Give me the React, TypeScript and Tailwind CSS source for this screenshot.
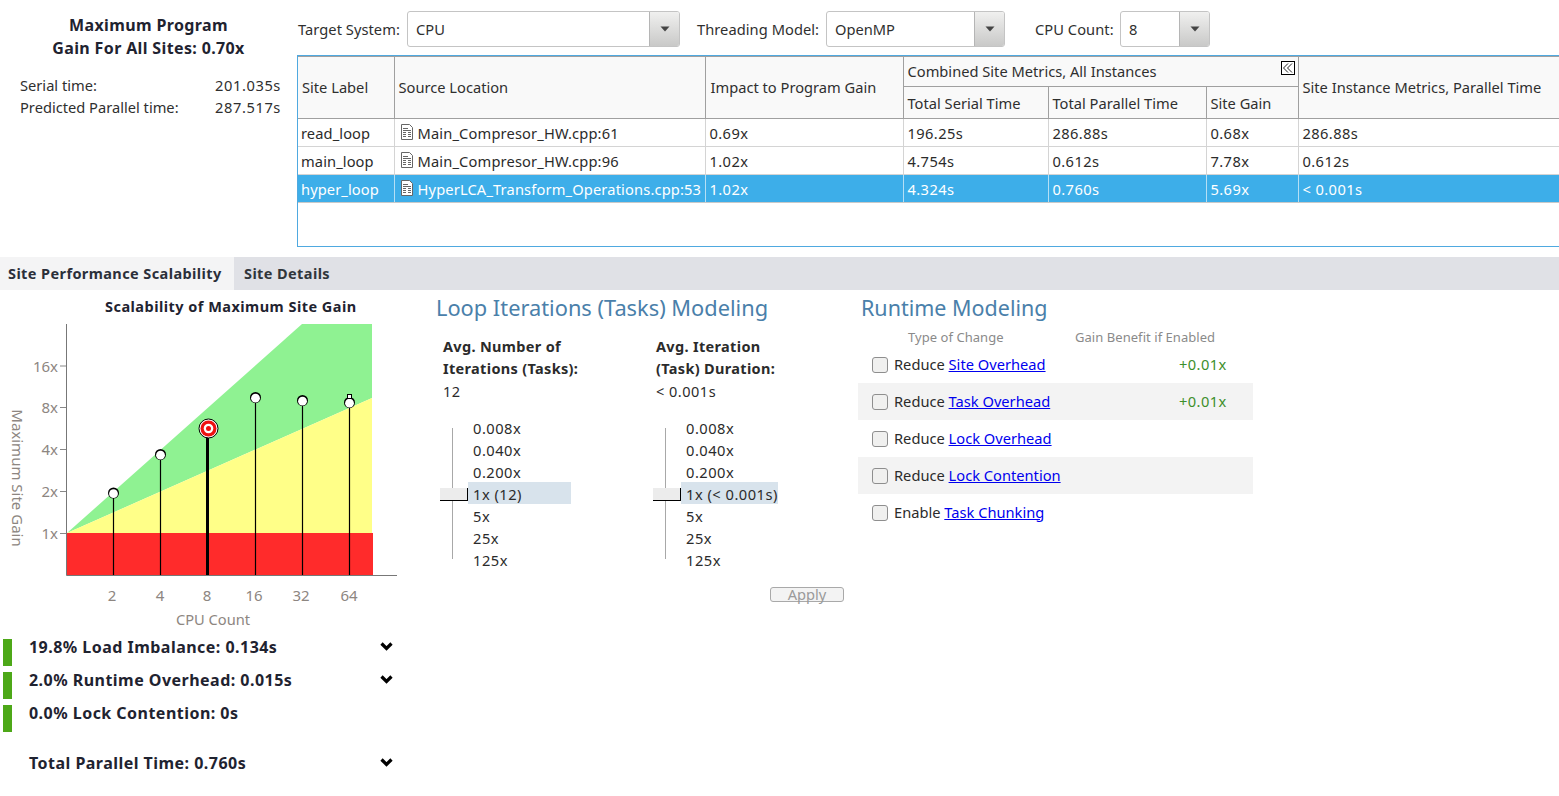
import React from "react";

function DocIcon() {
  const c = "#666666";
  return (
    <svg width="12" height="16" viewBox="0 0 12 16" className="shrink-0 mb-[1px]">
      <path d="M0.5 0.5H8.5L11.5 3.5V15.5H0.5Z" fill="#fff" stroke={c} />
      <path d="M2 4.5H7M2 6.5H10M2 8.5H5M7 8.5H10M2 10.5H5M7 10.5H10M2 12.5H5M7 12.5H10" stroke={c} />
    </svg>
  );
}

function Combo({ label, value, width, labelW }: { label: string; value: string; width: string; labelW: string }) {
  return (
    <div className="flex items-center gap-[7px]">
      <span className={`${labelW} shrink-0 pb-[1px] text-[14.67px] tracking-[0.05px] text-[#2f2f2f] whitespace-nowrap`}>{label}</span>
      <div className={`flex h-[36px] ${width} rounded-[3px] border border-[#c4c4c4] bg-white overflow-hidden`}>
        <span className="flex-1 min-w-0 pl-[8px] pb-[1px] flex items-center text-[14.67px] text-[#2f2f2f]">{value}</span>
        <span className="w-[30px] flex items-center justify-center border-l border-[#b5b5b5] bg-gradient-to-b from-[#f0f0ef] to-[#c9c9c8]">
          <svg width="10" height="6" viewBox="0 0 10 6"><path d="M0.5 0.5H9.5L5 5.5Z" fill="#444" /></svg>
        </span>
      </div>
    </div>
  );
}

const rows = [
  { label: "read_loop", src: "Main_Compresor_HW.cpp:61", impact: "0.69x", serial: "196.25s", par: "286.88s", gain: "0.68x", inst: "286.88s" },
  { label: "main_loop", src: "Main_Compresor_HW.cpp:96", impact: "1.02x", serial: "4.754s", par: "0.612s", gain: "7.78x", inst: "0.612s" },
  { label: "hyper_loop", src: "HyperLCA_Transform_Operations.cpp:53", impact: "1.02x", serial: "4.324s", par: "0.760s", gain: "5.69x", inst: "< 0.001s", sel: true },
];

function SiteTable() {
  const th = "border border-[#a0a0a0] bg-[#f9f9f9] font-normal text-left pr-[4px] text-[14.67px] text-[#2f2f2f] whitespace-nowrap";
  return (
    <div className="h-[192px] border-l border-t border-b border-[#4fa9e0] overflow-hidden">
      <table className="table-fixed border-collapse w-[1261px]">
        <colgroup>
          <col className="w-[96px]" />
          <col className="w-[311px]" />
          <col className="w-[198px]" />
          <col className="w-[145px]" />
          <col className="w-[158px]" />
          <col className="w-[92px]" />
          <col className="w-[261px]" />
        </colgroup>
        <thead>
          <tr className="h-[30px]">
            <th rowSpan={2} className={`${th} border-l-0 pl-[4px] pb-[2px]`}>Site Label</th>
            <th rowSpan={2} className={`${th} pl-[4px] pb-[2px]`}>Source Location</th>
            <th rowSpan={2} className={`${th} pl-[5px] pb-[2px]`}>Impact to Program Gain</th>
            <th colSpan={3} className={`${th} pl-[4px] relative pb-[2px]`}>
              Combined Site Metrics, All Instances
              <span className="absolute right-[3px] top-[4px] w-[14px] h-[14px] bg-white border border-black flex items-center justify-center">
                <svg width="12" height="12" viewBox="0 0 12 12" fill="none" stroke="#222"><path d="M6 1.5L1.5 6L6 10.5M10 1.5L5.5 6L10 10.5" /></svg>
              </span>
            </th>
            <th rowSpan={2} className={`${th} pl-[4px] pb-[2px]`}>Site Instance Metrics, Parallel Time</th>
          </tr>
          <tr className="h-[32px]">
            <th className={`${th} pl-[4px]`}>Total Serial Time</th>
            <th className={`${th} pl-[4px]`}>Total Parallel Time</th>
            <th className={`${th} pl-[4px]`}>Site Gain</th>
          </tr>
        </thead>
        <tbody>
          {rows.map((r) => {
            const td = `border border-[#d4d4d4] pr-[3px] text-[14.67px] whitespace-nowrap ${r.sel ? "border-y-[#c9c9c9] border-x-[#b5dff5]" : ""}`;
            const num = `${td} pl-[4px] tracking-[0.4px]`;
            return (
              <tr key={r.label} className={`h-[28px] ${r.sel ? "bg-[#3daee9] text-white" : "text-[#2b2b2b]"}`}>
                <td className={`${td} border-l-0 pl-[3px] tracking-[0.1px]`}>{r.label}</td>
                <td className={`${td} pl-[6px] tracking-[0.15px]`}>
                  <span className="flex items-center gap-[5px]">
                    <DocIcon />
                    {r.src}
                  </span>
                </td>
                <td className={num}>{r.impact}</td>
                <td className={num}>{r.serial}</td>
                <td className={num}>{r.par}</td>
                <td className={num}>{r.gain}</td>
                <td className={num}>{r.inst}</td>
              </tr>
            );
          })}
        </tbody>
      </table>
    </div>
  );
}

function Chart() {
  const yTicks = [
    ["16x", 366],
    ["8x", 407.5],
    ["4x", 449.5],
    ["2x", 491.5],
    ["1x", 533.5],
  ] as const;
  const xs = [
    ["2", 113.5, 493.5, 112],
    ["4", 160.5, 455, 160],
    ["16", 255.5, 398, 254],
    ["32", 302.5, 401, 301],
    ["64", 349.5, 403, 349],
  ] as const;
  return (
    <svg width="410" height="340" viewBox="0 290 410 340" className="block" style={{ fontFamily: "'Noto Sans', sans-serif" }}>
      <polygon points="67,533 302,324 372,324 372,398" fill="#8ff292" />
      <polygon points="67,533 372,398 372,533" fill="#ffff88" />
      <rect x="67" y="533" width="306" height="42" fill="#ff2b2b" />
      <path d="M66.5 324V575.5H397" fill="none" stroke="#777" />
      {yTicks.map(([t, y]) => (
        <g key={t}>
          <path d={`M60 ${y}H66`} stroke="#888" />
          <text x="58" y={y + 5.5} textAnchor="end" fontSize="15" fill="#8d8681">{t}</text>
        </g>
      ))}
      <text transform="translate(16 478) rotate(90)" textAnchor="middle" fontSize="15" fill="#8d8681" dominantBaseline="middle">Maximum Site Gain</text>
      {xs.map(([t, x, cy, lx]) => (
        <g key={t}>
          <path d={`M${x} ${cy}V575`} stroke="#000" strokeWidth="1.2" />
          <circle cx={x} cy={cy - 0.5} r="5.5" fill="#000" />
          <circle cx={x} cy={cy + 0.2} r="4.4" fill="#fff" />
          <text x={lx} y="601" textAnchor="middle" fontSize="15" fill="#8d8681">{t}</text>
        </g>
      ))}
      <rect x="347.5" y="394.5" width="4" height="4" fill="#fff" stroke="#000" />
      <path d="M207.5 430V575" stroke="#000" strokeWidth="3" />
      <circle cx="208.5" cy="428.5" r="9.5" fill="#fff" stroke="#000" strokeWidth="1" />
      <circle cx="208.5" cy="428.5" r="8" fill="#ee1111" />
      <circle cx="208.5" cy="428.5" r="4.8" fill="#fff" />
      <circle cx="208.5" cy="428.5" r="2.5" fill="#ee1111" />
      <text x="207" y="601" textAnchor="middle" fontSize="15" fill="#8d8681">8</text>
      <text x="213" y="624.5" textAnchor="middle" fontSize="14.67" fill="#8d8681">CPU Count</text>
    </svg>
  );
}

function Chevron() {
  return (
    <svg width="13" height="9" viewBox="0 0 13 9" className="shrink-0">
      <path d="M1.5 1.5L6.5 6.5L11.5 1.5" fill="none" stroke="#000" strokeWidth="3.2" />
    </svg>
  );
}

function Metric({ text, bar, chevron, className }: { text: string; bar?: boolean; chevron?: boolean; className?: string }) {
  return (
    <div className={`h-[27px] flex items-start ${className ?? ""}`}>
      <div className={`w-[9px] h-[27px] ml-[3px] ${bar ? "bg-[#4da818]" : ""}`} />
      <span className="ml-[17px] w-[351px] text-[16px] leading-[17px] font-bold tracking-[0.47px] text-[#1f2330] whitespace-nowrap">{text}</span>
      {chevron && <span className="mt-[3px]"><Chevron /></span>}
    </div>
  );
}

function SliderCol({ title, value, current, hlW }: { title: string[]; value: string; current: string; hlW: string }) {
  const items = ["0.008x", "0.040x", "0.200x", current, "5x", "25x", "125x"];
  return (
    <div className="w-[213px] shrink-0">
      <div className="pl-[7px] h-[81px] text-[14.5px] leading-[22px] text-[#2b2b2b]">
        <div className="-mt-[1px] font-bold tracking-[0.33px]">{title[0]}</div>
        <div className="font-bold tracking-[0.33px]">{title[1]}</div>
        <div className="mt-[1px] tracking-[0.5px]">{value}</div>
      </div>
      <div className="flex items-stretch">
        <div className="relative w-[28px] pt-[12px] ml-[4px] shrink-0">
          <div className="w-px h-[131px] bg-[#a8a8a8] ml-[12px]" />
          <div className="absolute left-0 top-[72px] w-[28px] h-[13px] bg-[#ececec] border-b border-r border-black" />
        </div>
        <div className="flex flex-col">
          {items.map((t, i) => (
            <div key={t} className={`h-[22px] flex items-center pl-[5px] pt-[2px] text-[14.67px] tracking-[0.5px] text-[#2b2b2b] whitespace-nowrap ${i === 3 ? `bg-[#d8e3ec] ${hlW}` : ""}`}>{t}</div>
          ))}
        </div>
      </div>
    </div>
  );
}

const runtime = [
  { verb: "Reduce", link: "Site Overhead", gain: "+0.01x" },
  { verb: "Reduce", link: "Task Overhead", gain: "+0.01x", shade: true },
  { verb: "Reduce", link: "Lock Overhead" },
  { verb: "Reduce", link: "Lock Contention", shade: true },
  { verb: "Enable", link: "Task Chunking" },
];

export default function App() {
  return (
    <div className="w-full h-[796px] overflow-hidden bg-white font-['Noto_Sans','Liberation_Sans',sans-serif] text-[#2b2b2b]">
      <div className="flex h-[257px]">
        <aside className="w-[297px] shrink-0">
          <div className="pt-[14px] text-center text-[16px] leading-[23px] font-bold tracking-[0.36px] text-[#1f2330]">
            <div>Maximum Program</div>
            <div>Gain For All Sites: 0.70x</div>
          </div>
          <div className="mt-[14px] pl-[20px] pr-[16px] text-[14.67px] leading-[22px] text-[#2f2f2f]">
            <div className="flex justify-between"><span>Serial time:</span><span className="tracking-[0.6px]">201.035s</span></div>
            <div className="flex justify-between"><span>Predicted Parallel time:</span><span className="tracking-[0.6px]">287.517s</span></div>
          </div>
        </aside>
        <div className="flex-1 min-w-0">
          <div className="h-[55px] pt-[11px] pl-[1px] flex items-start">
            <Combo label="Target System:" value="CPU" width="w-[273px]" labelW="w-[102px]" />
            <div className="ml-[17px]"><Combo label="Threading Model:" value="OpenMP" width="w-[179px]" labelW="w-[122px]" /></div>
            <div className="ml-[30px]"><Combo label="CPU Count:" value="8" width="w-[90px]" labelW="w-[78px]" /></div>
          </div>
          <SiteTable />
        </div>
      </div>

      <div className="h-[33px] flex bg-[#e0e1e6] text-[14.5px] font-bold tracking-[0.4px] text-[#2b2f3a]">
        <div className="w-[234px] pl-[8px] flex items-center bg-[#f4f4f5] whitespace-nowrap">Site Performance Scalability</div>
        <div className="pl-[10px] flex items-center text-[#31363b]">Site Details</div>
      </div>

      <div className="flex">
        <div className="w-[425px] shrink-0">
          <div className="h-[349px] relative">
            <div className="absolute left-[105px] top-[6px] text-[14.5px] leading-[20px] font-bold tracking-[0.47px] text-[#1f2330] whitespace-nowrap">Scalability of Maximum Site Gain</div>
            <Chart />
          </div>
          <Metric text="19.8% Load Imbalance: 0.134s" bar chevron />
          <Metric text="2.0% Runtime Overhead: 0.015s" bar chevron className="mt-[6px]" />
          <Metric text="0.0% Lock Contention: 0s" bar className="mt-[6px]" />
          <Metric text="Total Parallel Time: 0.760s" chevron className="mt-[23px]" />
        </div>

        <div className="w-[425px] shrink-0 pl-[11px]">
          <h2 className="pt-[4px] h-[46px] text-[21.8px] leading-[28px] text-[#4a80aa] whitespace-nowrap">Loop Iterations (Tasks) Modeling</h2>
          <div className="flex">
            <SliderCol title={["Avg. Number of", "Iterations (Tasks):"]} value="12" current="1x (12)" hlW="w-[103px]" />
            <SliderCol title={["Avg. Iteration", "(Task) Duration:"]} value="< 0.001s" current="1x (< 0.001s)" hlW="w-[97px]" />
          </div>
          <div className="mt-[17px] ml-[334px] w-[74px] h-[15px] rounded-[3px] border border-[#a9a9a9] bg-[#f3f3f3] flex items-center justify-center pb-[2px] text-[14.67px] text-[#9a9a9a]">Apply</div>
        </div>

        <div className="w-[395px] ml-[8px] shrink-0">
          <h2 className="pt-[4px] pl-[3px] h-[39px] text-[21.5px] leading-[28px] text-[#4a80aa] whitespace-nowrap">Runtime Modeling</h2>
          <div className="h-[17px] flex items-center text-[13px] tracking-[0.05px] text-[#8a8a8a]">
            <span className="ml-[50px] w-[167px]">Type of Change</span>
            <span>Gain Benefit if Enabled</span>
          </div>
          {runtime.map((r) => (
            <div key={r.link} className={`h-[37px] flex items-center ${r.shade ? "bg-[#f3f3f3]" : ""}`}>
              <span className="ml-[14px] w-[16px] h-[16px] rounded-[3px] border border-[#8e8e8e] bg-[#f0f0ef] shrink-0" />
              <span className="ml-[6px] w-[285px] pb-[2px] text-[14.67px] text-[#2b2b2b] whitespace-nowrap">
                {r.verb} <a className="text-[#0000ee] underline">{r.link}</a>
              </span>
              {r.gain && <span className="pb-[2px] text-[14.67px] tracking-[0.4px] text-[#3d8f2b]">{r.gain}</span>}
            </div>
          ))}
        </div>
      </div>
    </div>
  );
}
